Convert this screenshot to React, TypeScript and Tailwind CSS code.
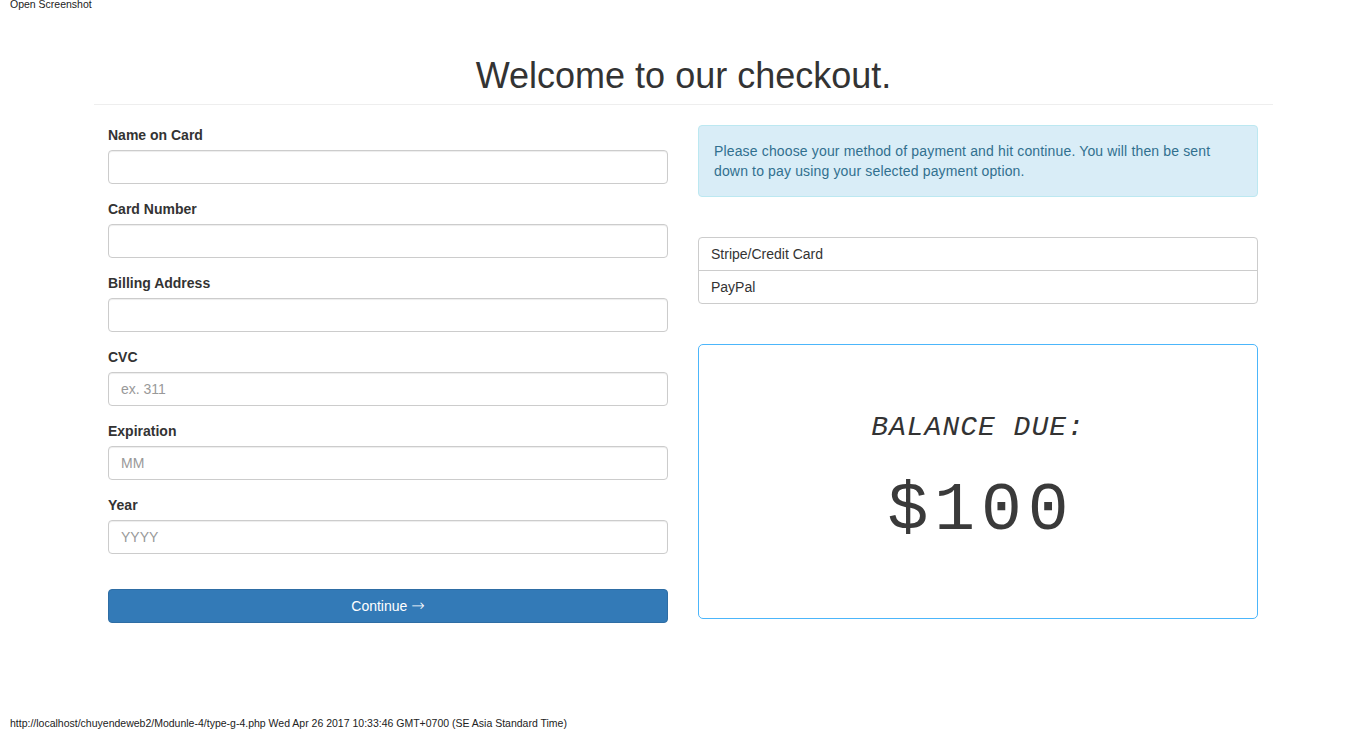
import React from "react";

const fields = [
  { label: "Name on Card", placeholder: "" },
  { label: "Card Number", placeholder: "" },
  { label: "Billing Address", placeholder: "" },
  { label: "CVC", placeholder: "ex. 311" },
  { label: "Expiration", placeholder: "MM" },
  { label: "Year", placeholder: "YYYY" },
];

export default function App() {
  return (
    <div className="relative min-h-[729px] w-full bg-white text-[#333] font-['Liberation_Sans',Arial,sans-serif]">
      <div className="absolute left-[10px] top-[-2px] text-[10.5px] leading-[12px] text-[#222]">Open Screenshot</div>

      <div className="pt-[56px] w-[1179px] ml-[94px]">
        <h1 className="text-center text-[36px] leading-[40px] text-[#333]">Welcome to our checkout.</h1>
        <div className="mt-[8px] h-px bg-[#eee]" />

        <div className="flex gap-[30px] px-[14px] pt-[20px]">
          <div className="w-[560px] flex flex-col">
            {fields.map((f) => (
              <div key={f.label} className="mb-[15px]">
                <label className="block text-[14px] leading-[20px] font-bold text-[#333] mb-[5px]">{f.label}</label>
                <input
                  placeholder={f.placeholder}
                  className="block w-full h-[34px] border border-[#ccc] rounded-[4px] px-[12px] text-[14px] placeholder:text-[#999] shadow-[inset_0_1px_1px_rgba(0,0,0,0.075)] outline-none"
                />
              </div>
            ))}
            <button className="mt-[20px] h-[34px] w-full rounded-[4px] bg-[#337ab7] border border-[#2e6da4] text-white text-[14px] leading-[20px] flex items-center justify-center gap-[4px]">
              <span>Continue</span>
              <span className="font-['DejaVu_Sans',sans-serif] text-[16px] leading-[20px] font-light">→</span>
            </button>
          </div>

          <div className="w-[560px] flex flex-col">
            <div className="rounded-[4px] border border-[#bce8f1] bg-[#d9edf7] text-[#31708f] text-[14px] leading-[20px] tracking-[0.15px] pl-[15px] pr-[30px] pt-[15px] pb-[15px]">
              Please choose your method of payment and hit continue. You will then be sent down to pay using your selected payment option.
            </div>

            <div className="mt-[40px] rounded-[4px] border border-[#ccc] text-[14px] text-[#333]">
              <div className="h-[33px] flex items-center px-[12px] border-b border-[#ccc]">Stripe/Credit Card</div>
              <div className="h-[32px] flex items-center px-[12px]">PayPal</div>
            </div>

            <div className="mt-[40px] h-[275px] rounded-[5px] border border-[#4cb6fb] flex flex-col items-center pt-[67px]">
              <div className="italic text-[28px] leading-[32px] tracking-[1px] font-['Liberation_Mono','Courier_New',monospace] text-[#333]">
                BALANCE DUE:
              </div>
              <div className="mt-[31px] text-[68px] leading-[72px] tracking-[6px] pl-[6px] font-['Liberation_Mono','Courier_New',monospace] text-[#3a3a3a]">
                $100
              </div>
            </div>
          </div>
        </div>
      </div>

      <div className="absolute left-[10px] top-[717px] text-[10.5px] leading-[12px] text-[#222]">
        http://localhost/chuyendeweb2/Modunle-4/type-g-4.php Wed Apr 26 2017 10:33:46 GMT+0700 (SE Asia Standard Time)
      </div>
    </div>
  );
}
